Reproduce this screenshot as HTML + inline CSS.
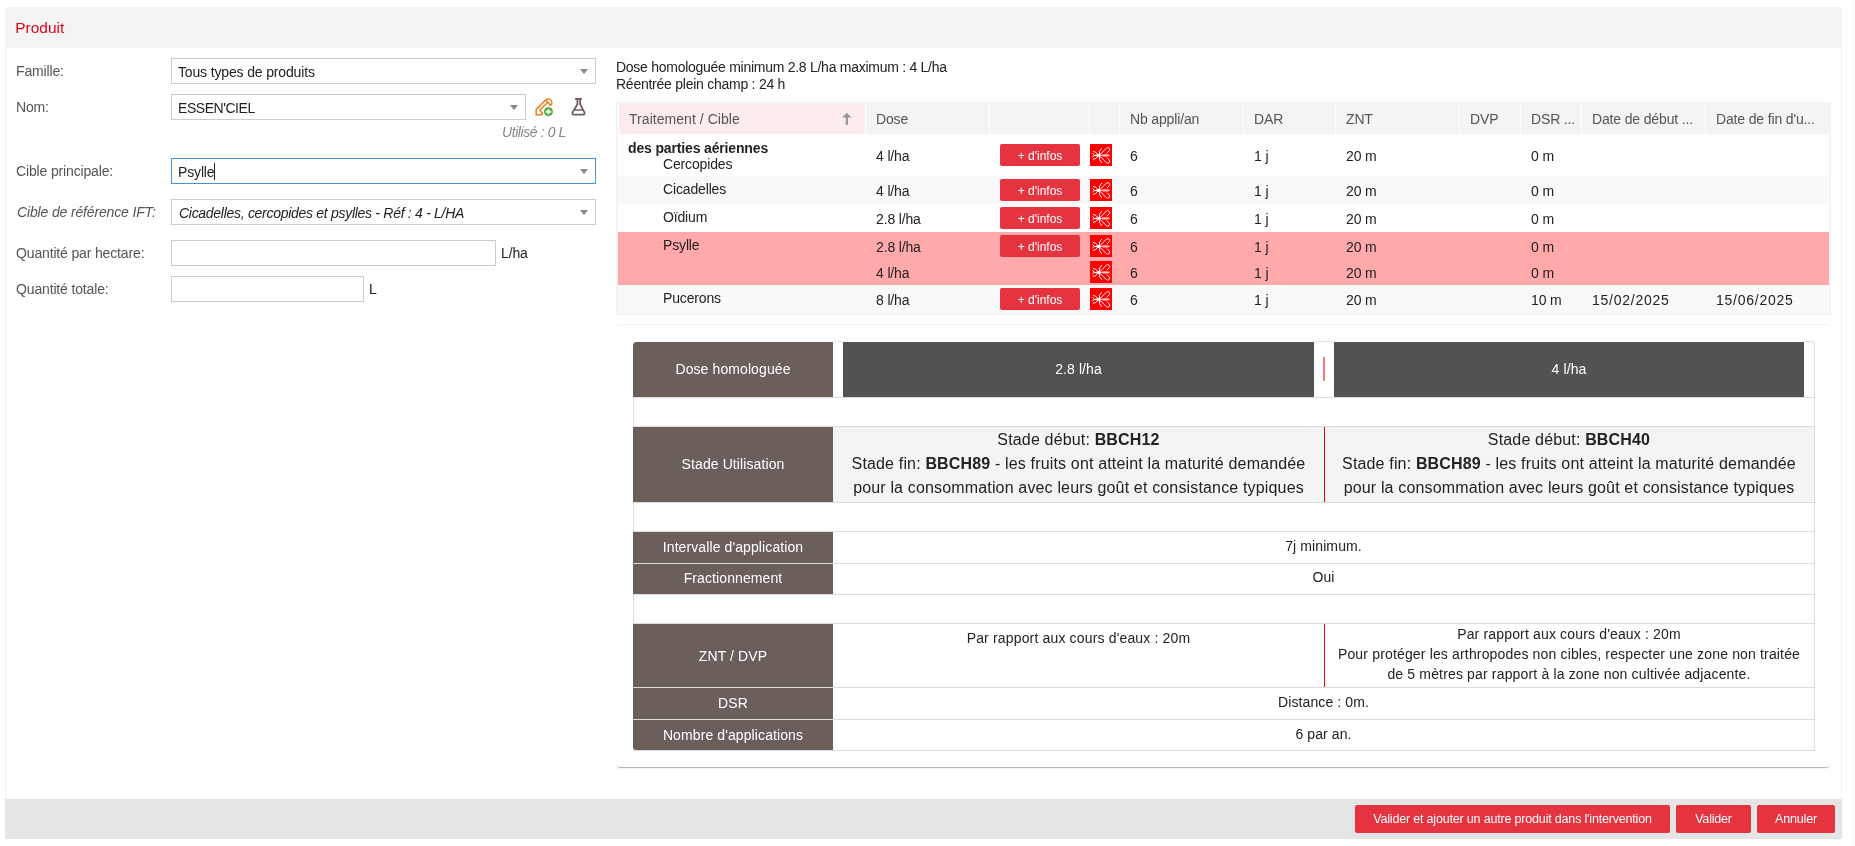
<!DOCTYPE html>
<html><head><meta charset="utf-8"><title>Produit</title>
<style>
html{background:#fff}
html,body{margin:0;padding:0;width:1855px;height:846px;overflow:hidden;position:relative}
body{will-change:transform}
body>div,body>svg{position:absolute}
.t{position:absolute;white-space:nowrap;font-family:"Liberation Sans",sans-serif}
.lato{letter-spacing:-0.15px}
.rb{letter-spacing:0.1px}
.rb16{letter-spacing:0.16px}
b{font-weight:bold}
</style></head><body>
<div style="left:5px;top:7px;width:1837px;height:832px;background:#fff;border-left:1px solid #f2f2f2;border-right:1px solid #f2f2f2;box-sizing:border-box"></div>
<div style="left:5px;top:7px;width:1837px;height:41px;background:#f4f4f4"></div>
<div style="left:1852px;top:0px;width:1px;height:846px;background:#f4f4f4"></div>
<div class="t " style="left:15.2px;top:20.28px;font-size:15.5px;line-height:15.5px;color:#e2061b;letter-spacing:0px">Produit</div>
<div class="t lato" style="left:16px;top:64.15px;font-size:14px;line-height:14px;color:#555">Famille:</div>
<div class="t lato" style="left:16px;top:100.15px;font-size:14px;line-height:14px;color:#555">Nom:</div>
<div class="t lato" style="left:16px;top:164.15px;font-size:14px;line-height:14px;color:#555">Cible principale:</div>
<div class="t lato" style="left:17px;top:205.15px;font-size:14px;line-height:14px;color:#555"><i>Cible de référence IFT:</i></div>
<div class="t lato" style="left:16px;top:246.15px;font-size:14px;line-height:14px;color:#555">Quantité par hectare:</div>
<div class="t lato" style="left:16px;top:282.15px;font-size:14px;line-height:14px;color:#555">Quantité totale:</div>
<div style="left:171px;top:58px;width:425px;height:26px;border:1px solid #ccc;box-sizing:border-box;background:#fff"></div>
<div style="left:580px;top:69px;width:0;height:0;border-left:4px solid transparent;border-right:4px solid transparent;border-top:5px solid #888"></div>
<div class="t lato" style="left:178px;top:65.15px;font-size:14px;line-height:14px;color:#222">Tous types de produits</div>
<div style="left:171px;top:94px;width:355px;height:26px;border:1px solid #ccc;box-sizing:border-box;background:#fff"></div>
<div style="left:510px;top:105px;width:0;height:0;border-left:4px solid transparent;border-right:4px solid transparent;border-top:5px solid #888"></div>
<div class="t " style="left:178px;top:101.15px;font-size:14px;line-height:14px;color:#222;letter-spacing:-0.45px">ESSEN'CIEL</div>
<div class="t " style="left:366.00px;width:200px;text-align:right;top:125.15px;font-size:14px;line-height:14px;color:#888;letter-spacing:-0.4px"><i>Utilisé : 0 L</i></div>
<div style="left:171px;top:158px;width:425px;height:26px;border:1px solid #4a90d9;box-sizing:border-box;background:#fff"></div>
<div style="left:580px;top:169px;width:0;height:0;border-left:4px solid transparent;border-right:4px solid transparent;border-top:5px solid #888"></div>
<div class="t lato" style="left:178px;top:165.15px;font-size:14px;line-height:14px;color:#222">Psylle</div>
<div style="left:214px;top:163px;width:1px;height:17px;background:#222"></div>
<div style="left:171px;top:199px;width:425px;height:26px;border:1px solid #ccc;box-sizing:border-box;background:#fff"></div>
<div style="left:580px;top:210px;width:0;height:0;border-left:4px solid transparent;border-right:4px solid transparent;border-top:5px solid #888"></div>
<div class="t " style="left:179px;top:206.15px;font-size:14px;line-height:14px;color:#222;letter-spacing:-0.29px"><i>Cicadelles, cercopides et psylles - Réf : 4 - L/HA</i></div>
<div style="left:171px;top:240px;width:325px;height:26px;border:1px solid #ccc;box-sizing:border-box;background:#fff"></div>
<div class="t lato" style="left:501px;top:246.15px;font-size:14px;line-height:14px;color:#222">L/ha</div>
<div style="left:171px;top:276px;width:193px;height:26px;border:1px solid #ccc;box-sizing:border-box;background:#fff"></div>
<div class="t lato" style="left:369px;top:282.15px;font-size:14px;line-height:14px;color:#222">L</div>
<svg style="left:530px;top:94px" width="30" height="26" viewBox="0 0 30 26">
<g transform="translate(6.15 20.65) rotate(-45)" fill="none" stroke="#f07d19" stroke-width="1.5" stroke-linejoin="miter">
<path d="M0 0 L3.7 -3.7 L17 -3.7 A3.7 3.7 0 0 1 17 3.7 L3.7 3.7 Z"/>
<path d="M17 -3.7 V3.7 M5.6 -0.6 H17 M5.6 -0.6 V3.7"/>
</g>
<circle cx="18.45" cy="17.7" r="5.6" fill="#fff"/>
<circle cx="18.45" cy="17.7" r="4.45" fill="#3eab2b"/>
<path d="M18.45 14.9 V20.6 M15.6 17.7 H21.3" stroke="#fff" stroke-width="1.9"/>
</svg>
<svg style="left:570px;top:97px" width="18" height="20" viewBox="0 0 18 20">
<path d="M5 1.9 H11.9" stroke="#6b5f5b" stroke-width="1.9"/>
<path d="M7.4 1.9 V7.2 L2.6 15.4 Q1.6 17.6 3.9 17.6 H13.1 Q15.4 17.6 14.4 15.4 L10.1 7.2 V1.9" fill="none" stroke="#6b5f5b" stroke-width="1.8" stroke-linejoin="round"/>
<path d="M3.9 13 H13.1" stroke="#6b5f5b" stroke-width="1.7" opacity="0.85"/>
</svg>
<div class="t " style="left:616px;top:60.15px;font-size:14px;line-height:14px;color:#222;letter-spacing:-0.27px">Dose homologuée minimum 2.8 L/ha maximum : 4 L/ha</div>
<div class="t " style="left:616px;top:77.15px;font-size:14px;line-height:14px;color:#222;letter-spacing:-0.25px">Réentrée plein champ : 24 h</div>
<div style="left:616px;top:102px;width:1215px;height:213px;border:2px solid #f4f4f4;box-sizing:border-box;background:#fff"></div>
<div style="left:619px;top:104px;width:246px;height:30px;background:#fcecec"></div>
<div style="left:866px;top:104px;width:123px;height:30px;background:#f4f4f4"></div>
<div style="left:990px;top:104px;width:99px;height:30px;background:#f4f4f4"></div>
<div style="left:1090px;top:104px;width:29px;height:30px;background:#f4f4f4"></div>
<div style="left:1120px;top:104px;width:123px;height:30px;background:#f4f4f4"></div>
<div style="left:1244px;top:104px;width:91px;height:30px;background:#f4f4f4"></div>
<div style="left:1336px;top:104px;width:123px;height:30px;background:#f4f4f4"></div>
<div style="left:1460px;top:104px;width:60px;height:30px;background:#f4f4f4"></div>
<div style="left:1521px;top:104px;width:60px;height:30px;background:#f4f4f4"></div>
<div style="left:1582px;top:104px;width:123px;height:30px;background:#f4f4f4"></div>
<div style="left:1706px;top:104px;width:123px;height:30px;background:#f4f4f4"></div>
<div class="t " style="left:629px;top:112.15px;font-size:14px;line-height:14px;color:#555;letter-spacing:0.05px">Traitement / Cible</div>
<svg style="left:841px;top:112px" width="12" height="13" viewBox="0 0 12 13"><path d="M5.83 0.8 L10.6 5.6 H7.0 V12.9 H4.7 V5.6 H1.06 Z" fill="#999"/></svg>
<div class="t lato" style="left:876px;top:112.15px;font-size:14px;line-height:14px;color:#555">Dose</div>
<div class="t lato" style="left:1130px;top:112.15px;font-size:14px;line-height:14px;color:#555">Nb appli/an</div>
<div class="t lato" style="left:1254px;top:112.15px;font-size:14px;line-height:14px;color:#555">DAR</div>
<div class="t lato" style="left:1346px;top:112.15px;font-size:14px;line-height:14px;color:#555">ZNT</div>
<div class="t lato" style="left:1470px;top:112.15px;font-size:14px;line-height:14px;color:#555">DVP</div>
<div class="t lato" style="left:1531px;top:112.15px;font-size:14px;line-height:14px;color:#555">DSR ...</div>
<div class="t lato" style="left:1592px;top:112.15px;font-size:14px;line-height:14px;color:#555">Date de début ...</div>
<div class="t lato" style="left:1716px;top:112.15px;font-size:14px;line-height:14px;color:#555">Date de fin d'u...</div>
<div style="left:618px;top:134px;width:1211px;height:42px;background:#fff"></div>
<div style="left:618px;top:176px;width:1211px;height:28px;background:#f9f9f9"></div>
<div style="left:618px;top:204px;width:1211px;height:28px;background:#fff"></div>
<div style="left:618px;top:232px;width:1211px;height:53px;background:#ffa9ab"></div>
<div style="left:618px;top:285px;width:1211px;height:28px;background:#f9f9f9"></div>
<div class="t lato" style="left:628px;top:141.15px;font-size:14px;line-height:14px;color:#222"><b>des parties aériennes</b></div>
<div class="t lato" style="left:663px;top:157.15px;font-size:14px;line-height:14px;color:#222">Cercopides</div>
<div class="t lato" style="left:876px;top:149.15px;font-size:14px;line-height:14px;color:#222">4 l/ha</div>
<div class="btn" style="left:1000px;top:144px;width:80px;height:22px;border-radius:2px;background:#e53340"><span class="t" style="position:static;font-size:12px;line-height:23px;padding-top:1px;color:#fff;display:block;text-align:center">+ d'infos</span></div>
<svg style="left:1090px;top:144px" width="22" height="22" viewBox="0 0 22 22"><rect width="22" height="22" fill="#ff0000"/>
<g fill="none" stroke="#fff" stroke-width="1" stroke-linecap="round" stroke-linejoin="round">
<path d="M11 9.6 L16.3 4.2 Q17.8 2.9 19.2 4.3 Q20.2 5.6 19.1 6.9 L17.1 8.9"/>
<path d="M11 13.2 L16.3 18.6 Q17.8 19.9 19.2 18.5 Q20.2 17.2 19.1 15.9 L17.1 13.9"/>
<path d="M7.6 10.2 Q6.2 7.6 3.3 7.4 M7.6 12.6 Q6.2 15.2 3.3 15.4"/>
<path d="M9.7 9.9 L9.35 7.5 L11.6 4.3 M9.7 12.9 L9.35 15.3 L11.6 18.5"/>
<path d="M4.3 11.4 L2.7 9.6 M4.3 11.4 L2.7 13"/>
</g>
<path d="M3.4 11.4 L7.5 10.3 L7.5 12.5 Z" fill="#fff"/><ellipse cx="9" cy="11.4" rx="2" ry="1.6" fill="#fff"/>
<ellipse cx="15.5" cy="11.4" rx="4.3" ry="1.05" fill="#fff" opacity="0.78"/>
</svg>
<div class="t lato" style="left:1130px;top:149.15px;font-size:14px;line-height:14px;color:#222">6</div>
<div class="t lato" style="left:1254px;top:149.15px;font-size:14px;line-height:14px;color:#222">1 j</div>
<div class="t lato" style="left:1346px;top:149.15px;font-size:14px;line-height:14px;color:#222">20 m</div>
<div class="t lato" style="left:1531px;top:149.15px;font-size:14px;line-height:14px;color:#222">0 m</div>
<div class="t lato" style="left:663px;top:182.15px;font-size:14px;line-height:14px;color:#222">Cicadelles</div>
<div class="t lato" style="left:876px;top:183.95px;font-size:14px;line-height:14px;color:#222">4 l/ha</div>
<div class="btn" style="left:1000px;top:179px;width:80px;height:22px;border-radius:2px;background:#e53340"><span class="t" style="position:static;font-size:12px;line-height:23px;padding-top:1px;color:#fff;display:block;text-align:center">+ d'infos</span></div>
<svg style="left:1090px;top:179px" width="22" height="22" viewBox="0 0 22 22"><rect width="22" height="22" fill="#ff0000"/>
<g fill="none" stroke="#fff" stroke-width="1" stroke-linecap="round" stroke-linejoin="round">
<path d="M11 9.6 L16.3 4.2 Q17.8 2.9 19.2 4.3 Q20.2 5.6 19.1 6.9 L17.1 8.9"/>
<path d="M11 13.2 L16.3 18.6 Q17.8 19.9 19.2 18.5 Q20.2 17.2 19.1 15.9 L17.1 13.9"/>
<path d="M7.6 10.2 Q6.2 7.6 3.3 7.4 M7.6 12.6 Q6.2 15.2 3.3 15.4"/>
<path d="M9.7 9.9 L9.35 7.5 L11.6 4.3 M9.7 12.9 L9.35 15.3 L11.6 18.5"/>
<path d="M4.3 11.4 L2.7 9.6 M4.3 11.4 L2.7 13"/>
</g>
<path d="M3.4 11.4 L7.5 10.3 L7.5 12.5 Z" fill="#fff"/><ellipse cx="9" cy="11.4" rx="2" ry="1.6" fill="#fff"/>
<ellipse cx="15.5" cy="11.4" rx="4.3" ry="1.05" fill="#fff" opacity="0.78"/>
</svg>
<div class="t lato" style="left:1130px;top:183.95px;font-size:14px;line-height:14px;color:#222">6</div>
<div class="t lato" style="left:1254px;top:183.95px;font-size:14px;line-height:14px;color:#222">1 j</div>
<div class="t lato" style="left:1346px;top:183.95px;font-size:14px;line-height:14px;color:#222">20 m</div>
<div class="t lato" style="left:1531px;top:183.95px;font-size:14px;line-height:14px;color:#222">0 m</div>
<div class="t lato" style="left:663px;top:210.15px;font-size:14px;line-height:14px;color:#222">Oïdium</div>
<div class="t lato" style="left:876px;top:212.15px;font-size:14px;line-height:14px;color:#222">2.8 l/ha</div>
<div class="btn" style="left:1000px;top:207px;width:80px;height:22px;border-radius:2px;background:#e53340"><span class="t" style="position:static;font-size:12px;line-height:23px;padding-top:1px;color:#fff;display:block;text-align:center">+ d'infos</span></div>
<svg style="left:1090px;top:207px" width="22" height="22" viewBox="0 0 22 22"><rect width="22" height="22" fill="#ff0000"/>
<g fill="none" stroke="#fff" stroke-width="1" stroke-linecap="round" stroke-linejoin="round">
<path d="M11 9.6 L16.3 4.2 Q17.8 2.9 19.2 4.3 Q20.2 5.6 19.1 6.9 L17.1 8.9"/>
<path d="M11 13.2 L16.3 18.6 Q17.8 19.9 19.2 18.5 Q20.2 17.2 19.1 15.9 L17.1 13.9"/>
<path d="M7.6 10.2 Q6.2 7.6 3.3 7.4 M7.6 12.6 Q6.2 15.2 3.3 15.4"/>
<path d="M9.7 9.9 L9.35 7.5 L11.6 4.3 M9.7 12.9 L9.35 15.3 L11.6 18.5"/>
<path d="M4.3 11.4 L2.7 9.6 M4.3 11.4 L2.7 13"/>
</g>
<path d="M3.4 11.4 L7.5 10.3 L7.5 12.5 Z" fill="#fff"/><ellipse cx="9" cy="11.4" rx="2" ry="1.6" fill="#fff"/>
<ellipse cx="15.5" cy="11.4" rx="4.3" ry="1.05" fill="#fff" opacity="0.78"/>
</svg>
<div class="t lato" style="left:1130px;top:212.15px;font-size:14px;line-height:14px;color:#222">6</div>
<div class="t lato" style="left:1254px;top:212.15px;font-size:14px;line-height:14px;color:#222">1 j</div>
<div class="t lato" style="left:1346px;top:212.15px;font-size:14px;line-height:14px;color:#222">20 m</div>
<div class="t lato" style="left:1531px;top:212.15px;font-size:14px;line-height:14px;color:#222">0 m</div>
<div class="t lato" style="left:663px;top:238.15px;font-size:14px;line-height:14px;color:#222">Psylle</div>
<div class="t lato" style="left:876px;top:240.15px;font-size:14px;line-height:14px;color:#222">2.8 l/ha</div>
<div class="btn" style="left:1000px;top:235px;width:80px;height:22px;border-radius:2px;background:#e53340"><span class="t" style="position:static;font-size:12px;line-height:23px;padding-top:1px;color:#fff;display:block;text-align:center">+ d'infos</span></div>
<svg style="left:1090px;top:235px" width="22" height="22" viewBox="0 0 22 22"><rect width="22" height="22" fill="#ff0000"/>
<g fill="none" stroke="#fff" stroke-width="1" stroke-linecap="round" stroke-linejoin="round">
<path d="M11 9.6 L16.3 4.2 Q17.8 2.9 19.2 4.3 Q20.2 5.6 19.1 6.9 L17.1 8.9"/>
<path d="M11 13.2 L16.3 18.6 Q17.8 19.9 19.2 18.5 Q20.2 17.2 19.1 15.9 L17.1 13.9"/>
<path d="M7.6 10.2 Q6.2 7.6 3.3 7.4 M7.6 12.6 Q6.2 15.2 3.3 15.4"/>
<path d="M9.7 9.9 L9.35 7.5 L11.6 4.3 M9.7 12.9 L9.35 15.3 L11.6 18.5"/>
<path d="M4.3 11.4 L2.7 9.6 M4.3 11.4 L2.7 13"/>
</g>
<path d="M3.4 11.4 L7.5 10.3 L7.5 12.5 Z" fill="#fff"/><ellipse cx="9" cy="11.4" rx="2" ry="1.6" fill="#fff"/>
<ellipse cx="15.5" cy="11.4" rx="4.3" ry="1.05" fill="#fff" opacity="0.78"/>
</svg>
<div class="t lato" style="left:1130px;top:240.15px;font-size:14px;line-height:14px;color:#222">6</div>
<div class="t lato" style="left:1254px;top:240.15px;font-size:14px;line-height:14px;color:#222">1 j</div>
<div class="t lato" style="left:1346px;top:240.15px;font-size:14px;line-height:14px;color:#222">20 m</div>
<div class="t lato" style="left:1531px;top:240.15px;font-size:14px;line-height:14px;color:#222">0 m</div>
<div class="t lato" style="left:876px;top:266.15px;font-size:14px;line-height:14px;color:#222">4 l/ha</div>
<svg style="left:1090px;top:261px" width="22" height="22" viewBox="0 0 22 22"><rect width="22" height="22" fill="#ff0000"/>
<g fill="none" stroke="#fff" stroke-width="1" stroke-linecap="round" stroke-linejoin="round">
<path d="M11 9.6 L16.3 4.2 Q17.8 2.9 19.2 4.3 Q20.2 5.6 19.1 6.9 L17.1 8.9"/>
<path d="M11 13.2 L16.3 18.6 Q17.8 19.9 19.2 18.5 Q20.2 17.2 19.1 15.9 L17.1 13.9"/>
<path d="M7.6 10.2 Q6.2 7.6 3.3 7.4 M7.6 12.6 Q6.2 15.2 3.3 15.4"/>
<path d="M9.7 9.9 L9.35 7.5 L11.6 4.3 M9.7 12.9 L9.35 15.3 L11.6 18.5"/>
<path d="M4.3 11.4 L2.7 9.6 M4.3 11.4 L2.7 13"/>
</g>
<path d="M3.4 11.4 L7.5 10.3 L7.5 12.5 Z" fill="#fff"/><ellipse cx="9" cy="11.4" rx="2" ry="1.6" fill="#fff"/>
<ellipse cx="15.5" cy="11.4" rx="4.3" ry="1.05" fill="#fff" opacity="0.78"/>
</svg>
<div class="t lato" style="left:1130px;top:266.15px;font-size:14px;line-height:14px;color:#222">6</div>
<div class="t lato" style="left:1254px;top:266.15px;font-size:14px;line-height:14px;color:#222">1 j</div>
<div class="t lato" style="left:1346px;top:266.15px;font-size:14px;line-height:14px;color:#222">20 m</div>
<div class="t lato" style="left:1531px;top:266.15px;font-size:14px;line-height:14px;color:#222">0 m</div>
<div class="t lato" style="left:663px;top:291.15px;font-size:14px;line-height:14px;color:#222">Pucerons</div>
<div class="t lato" style="left:876px;top:292.75px;font-size:14px;line-height:14px;color:#222">8 l/ha</div>
<div class="btn" style="left:1000px;top:288px;width:80px;height:22px;border-radius:2px;background:#e53340"><span class="t" style="position:static;font-size:12px;line-height:23px;padding-top:1px;color:#fff;display:block;text-align:center">+ d'infos</span></div>
<svg style="left:1090px;top:288px" width="22" height="22" viewBox="0 0 22 22"><rect width="22" height="22" fill="#ff0000"/>
<g fill="none" stroke="#fff" stroke-width="1" stroke-linecap="round" stroke-linejoin="round">
<path d="M11 9.6 L16.3 4.2 Q17.8 2.9 19.2 4.3 Q20.2 5.6 19.1 6.9 L17.1 8.9"/>
<path d="M11 13.2 L16.3 18.6 Q17.8 19.9 19.2 18.5 Q20.2 17.2 19.1 15.9 L17.1 13.9"/>
<path d="M7.6 10.2 Q6.2 7.6 3.3 7.4 M7.6 12.6 Q6.2 15.2 3.3 15.4"/>
<path d="M9.7 9.9 L9.35 7.5 L11.6 4.3 M9.7 12.9 L9.35 15.3 L11.6 18.5"/>
<path d="M4.3 11.4 L2.7 9.6 M4.3 11.4 L2.7 13"/>
</g>
<path d="M3.4 11.4 L7.5 10.3 L7.5 12.5 Z" fill="#fff"/><ellipse cx="9" cy="11.4" rx="2" ry="1.6" fill="#fff"/>
<ellipse cx="15.5" cy="11.4" rx="4.3" ry="1.05" fill="#fff" opacity="0.78"/>
</svg>
<div class="t lato" style="left:1130px;top:292.75px;font-size:14px;line-height:14px;color:#222">6</div>
<div class="t lato" style="left:1254px;top:292.75px;font-size:14px;line-height:14px;color:#222">1 j</div>
<div class="t lato" style="left:1346px;top:292.75px;font-size:14px;line-height:14px;color:#222">20 m</div>
<div class="t lato" style="left:1531px;top:292.75px;font-size:14px;line-height:14px;color:#222">10 m</div>
<div class="t " style="left:1592px;top:292.75px;font-size:14px;line-height:14px;color:#222;letter-spacing:0.75px">15/02/2025</div>
<div class="t " style="left:1716px;top:292.75px;font-size:14px;line-height:14px;color:#222;letter-spacing:0.75px">15/06/2025</div>
<div style="left:616px;top:324px;width:1214px;height:443px;background:#fff;border-radius:4px;box-shadow:0 2px 1px -1px rgba(0,0,0,0.28),0 2px 3px -2px rgba(0,0,0,0.12);border-top:1px solid #f2f2f2;box-sizing:border-box"></div>
<div style="left:633px;top:341px;width:1182px;height:410px;border:1px solid #dcdcdc;border-top:none;border-radius:4px;box-sizing:border-box;background:#fff"></div>
<div style="left:633px;top:341px;width:1182px;height:1px;background:#fff"></div>
<div style="left:633px;top:342px;width:200px;height:55px;background:#6b5f5b;border-top-left-radius:4px"></div>
<div style="left:843px;top:342px;width:471px;height:55px;background:#525252"></div>
<div style="left:1334px;top:342px;width:470px;height:55px;background:#525252"></div>
<div style="left:1323px;top:357px;width:2px;height:24px;background:#f77"></div>
<div style="left:833px;top:341px;width:10px;height:1px;background:#e3e3e3"></div>
<div style="left:1314px;top:341px;width:20px;height:1px;background:#e3e3e3"></div>
<div style="left:1804px;top:341px;width:11px;height:56px;border-right:1px solid #dcdcdc;border-top:1px solid #dcdcdc;border-top-right-radius:4px;box-sizing:border-box;background:#fff"></div>
<div class="t rb" style="left:633.00px;width:200px;text-align:center;top:362.15px;font-size:14px;line-height:14px;color:#fff">Dose homologuée</div>
<div class="t rb" style="left:878.50px;width:400px;text-align:center;top:362.15px;font-size:14px;line-height:14px;color:#fff">2.8 l/ha</div>
<div class="t rb" style="left:1369.00px;width:400px;text-align:center;top:362.15px;font-size:14px;line-height:14px;color:#fff">4 l/ha</div>
<div style="left:633px;top:397px;width:1182px;height:1px;background:#dcdcdc"></div>
<div style="left:633px;top:426px;width:1182px;height:1px;background:#dcdcdc"></div>
<div style="left:633px;top:502px;width:1182px;height:1px;background:#dcdcdc"></div>
<div style="left:633px;top:531px;width:1182px;height:1px;background:#dcdcdc"></div>
<div style="left:633px;top:563px;width:1182px;height:1px;background:#dcdcdc"></div>
<div style="left:633px;top:594px;width:1182px;height:1px;background:#dcdcdc"></div>
<div style="left:633px;top:623px;width:1182px;height:1px;background:#dcdcdc"></div>
<div style="left:633px;top:687px;width:1182px;height:1px;background:#dcdcdc"></div>
<div style="left:633px;top:719px;width:1182px;height:1px;background:#dcdcdc"></div>
<div style="left:633px;top:750px;width:1182px;height:1px;background:#dcdcdc"></div>
<div style="left:633px;top:427px;width:200px;height:75px;background:#6b5f5b"></div>
<div style="left:833px;top:427px;width:981px;height:75px;background:#f4f4f4"></div>
<div style="left:1324px;top:427px;width:1px;height:75px;background:#e2061b"></div>
<div class="t rb" style="left:633.00px;width:200px;text-align:center;top:457.15px;font-size:14px;line-height:14px;color:#fff">Stade Utilisation</div>
<div class="t rb rb16" style="left:838.50px;width:480px;text-align:center;top:431.96px;font-size:16px;line-height:16px;color:#222">Stade début: <b>BBCH12</b></div>
<div class="t rb rb16" style="left:838.50px;width:480px;text-align:center;top:456.26px;font-size:16px;line-height:16px;color:#222">Stade fin: <b>BBCH89</b> - les fruits ont atteint la maturité demandée</div>
<div class="t rb rb16" style="left:838.50px;width:480px;text-align:center;top:480.26px;font-size:16px;line-height:16px;color:#222">pour la consommation avec leurs goût et consistance typiques</div>
<div class="t rb rb16" style="left:1329.00px;width:480px;text-align:center;top:431.96px;font-size:16px;line-height:16px;color:#222">Stade début: <b>BBCH40</b></div>
<div class="t rb rb16" style="left:1329.00px;width:480px;text-align:center;top:456.26px;font-size:16px;line-height:16px;color:#222">Stade fin: <b>BBCH89</b> - les fruits ont atteint la maturité demandée</div>
<div class="t rb rb16" style="left:1329.00px;width:480px;text-align:center;top:480.26px;font-size:16px;line-height:16px;color:#222">pour la consommation avec leurs goût et consistance typiques</div>
<div style="left:633px;top:532px;width:200px;height:31px;background:#6b5f5b"></div>
<div style="left:633px;top:564px;width:200px;height:30px;background:#6b5f5b"></div>
<div class="t rb" style="left:633.00px;width:200px;text-align:center;top:540.15px;font-size:14px;line-height:14px;color:#fff">Intervalle d'application</div>
<div class="t rb" style="left:633.00px;width:200px;text-align:center;top:571.15px;font-size:14px;line-height:14px;color:#fff">Fractionnement</div>
<div class="t rb" style="left:1123.50px;width:400px;text-align:center;top:539.15px;font-size:14px;line-height:14px;color:#222">7j minimum.</div>
<div class="t rb" style="left:1123.50px;width:400px;text-align:center;top:570.15px;font-size:14px;line-height:14px;color:#222">Oui</div>
<div style="left:633px;top:624px;width:200px;height:63px;background:#6b5f5b"></div>
<div style="left:633px;top:688px;width:200px;height:31px;background:#6b5f5b"></div>
<div style="left:633px;top:720px;width:200px;height:30px;background:#6b5f5b;border-bottom-left-radius:3px"></div>
<div style="left:1324px;top:624px;width:1px;height:63px;background:#e2061b"></div>
<div class="t rb" style="left:633.00px;width:200px;text-align:center;top:649.15px;font-size:14px;line-height:14px;color:#fff">ZNT / DVP</div>
<div class="t rb" style="left:633.00px;width:200px;text-align:center;top:696.15px;font-size:14px;line-height:14px;color:#fff">DSR</div>
<div class="t rb" style="left:633.00px;width:200px;text-align:center;top:728.15px;font-size:14px;line-height:14px;color:#fff">Nombre d'applications</div>
<div class="t rb rb16" style="left:838.50px;width:480px;text-align:center;top:631.15px;font-size:14px;line-height:14px;color:#222">Par rapport aux cours d'eaux : 20m</div>
<div class="t rb rb16" style="left:1329.00px;width:480px;text-align:center;top:627.15px;font-size:14px;line-height:14px;color:#222">Par rapport aux cours d'eaux : 20m</div>
<div class="t rb rb16" style="left:1329.00px;width:480px;text-align:center;top:647.15px;font-size:14px;line-height:14px;color:#222">Pour protéger les arthropodes non cibles, respecter une zone non traitée</div>
<div class="t rb rb16" style="left:1329.00px;width:480px;text-align:center;top:667.15px;font-size:14px;line-height:14px;color:#222">de 5 mètres par rapport à la zone non cultivée adjacente.</div>
<div class="t rb" style="left:1123.50px;width:400px;text-align:center;top:695.15px;font-size:14px;line-height:14px;color:#222">Distance : 0m.</div>
<div class="t rb" style="left:1123.50px;width:400px;text-align:center;top:727.15px;font-size:14px;line-height:14px;color:#222">6 par an.</div>
<div style="left:5px;top:799px;width:1837px;height:40px;background:#e5e5e5"></div>
<div class="btn" style="left:1355px;top:805px;width:315px;height:28px;border-radius:2px;background:#e53340"><span class="t" style="position:static;display:block;text-align:center;font-size:12.5px;line-height:28px;color:#fff;letter-spacing:-0.18px">Valider et ajouter un autre produit dans l'intervention</span></div>
<div class="btn" style="left:1676px;top:805px;width:75px;height:28px;border-radius:2px;background:#e53340"><span class="t" style="position:static;display:block;text-align:center;font-size:12.5px;line-height:28px;color:#fff;letter-spacing:-0.18px">Valider</span></div>
<div class="btn" style="left:1757px;top:805px;width:78px;height:28px;border-radius:2px;background:#e53340"><span class="t" style="position:static;display:block;text-align:center;font-size:12.5px;line-height:28px;color:#fff;letter-spacing:-0.18px">Annuler</span></div>
</body></html>
